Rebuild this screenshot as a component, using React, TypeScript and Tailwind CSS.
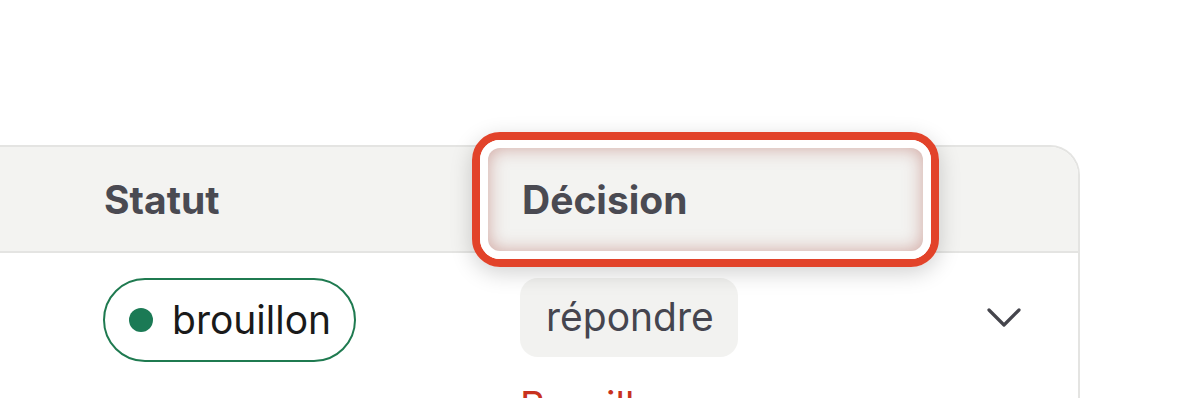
export default function App() {
  return (
    <div className="h-[398px] overflow-hidden bg-white font-['Inter',sans-serif]">
      <div className="ml-[-40px] mt-[145px] w-[1120px] rounded-t-[30px] border-x-2 border-t-2 border-[#e4e4e2]">
        {/* header */}
        <div className="grid h-[106px] grid-cols-[526px_434px_1fr] rounded-t-[28px] border-b-2 border-[#e4e4e2] bg-[#f3f3f1]">
          <div className="flex items-center pl-[142px] pt-[2px]">
            <span className="text-[39px] font-bold text-[#4a4a52]">Statut</span>
          </div>
          <div className="relative flex items-center pl-[34px] pt-[2px]">
            <span className="text-[39px] font-bold text-[#4a4a52]">Décision</span>
            {/* annotation highlight */}
            <div className="pointer-events-none absolute left-[-16px] right-[-17px] top-[-15px] bottom-[-16px] rounded-[28px] border-[8px] border-[#e2432a] shadow-[0_6px_22px_rgba(0,0,0,0.18)]">
              <div className="h-full rounded-[20px] border-[8px] border-white">
                <div className="h-full rounded-[12px] shadow-[inset_0_0_18px_rgba(175,90,80,0.5)]" />
              </div>
            </div>
          </div>
          <div />
        </div>

        {/* row */}
        <div className="grid grid-cols-[526px_434px_1fr] pt-[25px]">
          <div className="pl-[141px]">
            <span className="inline-flex h-[84px] items-center gap-[19px] rounded-full border-2 border-[#1f7a50] pl-[24px] pr-[23px]">
              <span className="h-[24px] w-[24px] rounded-full bg-[#1b7a55]" />
              <span className="text-[39px] text-[#1a1a1a]">brouillon</span>
            </span>
          </div>
          <div className="pl-[32px]">
            <span className="inline-flex h-[79px] items-center rounded-[18px] bg-[#f2f2f0] pl-[26px] pr-[24px] text-[39px] text-[#45454f]">
              répondre
            </span>
            <div className="mt-[20px] text-[39px] text-[#c8321e]">Brouillon</div>
          </div>
          <div className="pl-[65px] pt-[30px]">
            <svg width="34" height="20" viewBox="0 0 34 20" fill="none" stroke="#45454c" strokeWidth="3.2" strokeLinecap="round" strokeLinejoin="round">
              <polyline points="2,2 17,17 32,2" />
            </svg>
          </div>
        </div>
      </div>
    </div>
  );
}
